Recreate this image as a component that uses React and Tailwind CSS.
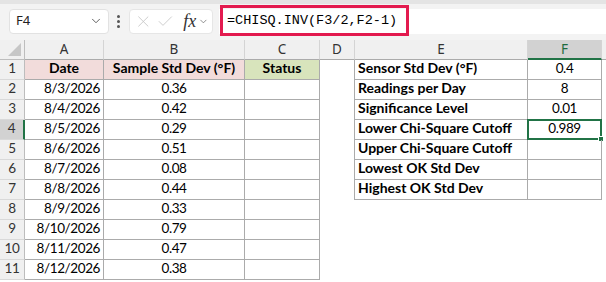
import { ChevronDown, X, Check } from "lucide-react";

const cols = ["A", "B", "C", "D", "E", "F"];
const widths = "grid-cols-[25px_79px_141px_75px_35px_173px_74px_1fr]";

const dates = [
  ["8/3/2026", "0.36"],
  ["8/4/2026", "0.42"],
  ["8/5/2026", "0.29"],
  ["8/6/2026", "0.51"],
  ["8/7/2026", "0.08"],
  ["8/8/2026", "0.44"],
  ["8/9/2026", "0.33"],
  ["8/10/2026", "0.79"],
  ["8/11/2026", "0.47"],
  ["8/12/2026", "0.38"],
];

const params = [
  ["Sensor Std Dev (°F)", "0.4"],
  ["Readings per Day", "8"],
  ["Significance Level", "0.01"],
  ["Lower Chi-Square Cutoff", "0.989"],
  ["Upper Chi-Square Cutoff", ""],
  ["Lowest OK Std Dev", ""],
  ["Highest OK Std Dev", ""],
];

const line = "border-[#ababab]";
const num = "text-[13.5px] tracking-[-0.4px]";

const Cell = ({ className = "", children }) => (
  <div className={`h-5 flex items-end pb-[1px] overflow-visible whitespace-nowrap ${className}`}>
    {children}
  </div>
);

const Row = ({ n }) => {
  const i = n - 1;
  const header = n === 1;
  const p = params[i];
  return (
    <>
      <Cell
        className={`justify-center ${num} text-[#333] border-b border-[#d9d9d9] ${
          n === 4 ? "bg-[#d2d2d2] text-[#1e6b3f] border-r-2 border-r-[#217346]" : "bg-[#f0f0f0] border-r border-r-[#bdbdbd]"
        }`}
      >
        {n}
      </Cell>
      {header ? (
        <>
          <Cell className={`justify-center font-bold bg-[#f2dcdb] border-r border-b ${line}`}>Date</Cell>
          <Cell className={`justify-center font-bold bg-[#f2dcdb] border-r border-b ${line}`}>Sample Std Dev (°F)</Cell>
          <Cell className={`justify-center font-bold bg-[#d8e4bc] border-r border-b ${line}`}>Status</Cell>
        </>
      ) : (
        <>
          <Cell className={`justify-end pr-[3px] ${num} border-r border-b ${line}`}>{dates[i - 1][0]}</Cell>
          <Cell className={`justify-center ${num} border-r border-b ${line}`}>{dates[i - 1][1]}</Cell>
          <Cell className={`border-r border-b ${line}`} />
        </>
      )}
      <Cell className={p ? `border-r ${line}` : ""} />
      {p ? (
        <>
          <Cell className={`pl-[3px] font-bold border-r border-b ${line}`}>{p[0]}</Cell>
          <Cell className={`relative justify-center ${num} border-r border-b ${line}`}>
            {p[1]}
            {n === 4 && (
              <div className="absolute -left-px -top-px -right-px -bottom-px border-2 border-[#217346]">
                <div className="absolute -right-[4px] -bottom-[4px] w-[6px] h-[6px] bg-[#217346] border border-white" />
              </div>
            )}
          </Cell>
        </>
      ) : (
        <>
          <Cell />
          <Cell />
        </>
      )}
      <Cell />
    </>
  );
};

const App = () => {
  return (
    <div className="w-[606px] h-[282px] overflow-hidden bg-white font-['Lato',sans-serif] text-[14px] text-black">
      {/* formula bar */}
      <div className="relative h-10 bg-[#f3f3f3] border-t-4 border-[#e4e4e4]">
        <div className="flex items-center h-full pb-[2px]">
          <div className="ml-[9px] w-[100px] h-[25px] bg-white rounded-[4px] border border-[#e2e2e2] flex items-center justify-between pl-[6px] pr-[5px] font-['Noto_Sans',sans-serif] text-[13px] text-[#222]">
            <span>F4</span>
            <ChevronDown size={14} strokeWidth={1.6} className="text-[#555]" />
          </div>
          <div className="ml-[8px] flex flex-col gap-[2px]">
            <span className="w-[3px] h-[3px] rounded-full bg-[#555]" />
            <span className="w-[3px] h-[3px] rounded-full bg-[#555]" />
            <span className="w-[3px] h-[3px] rounded-full bg-[#555]" />
          </div>
          <div className="ml-[9px] w-[84px] h-[25px] bg-white rounded-[4px] border border-[#e6e6e6] flex items-center pl-[4px] pr-[3px] text-[#c4c4c4]">
            <X size={19} strokeWidth={1.1} />
            <Check size={19} strokeWidth={1.1} className="ml-[3px]" />
            <span className="ml-[9px] font-['Liberation_Serif',serif] italic text-[18px] text-[#333] leading-none">fx</span>
            <ChevronDown size={11} strokeWidth={1.6} className="ml-[2px] text-[#666]" />
          </div>
          <div className="ml-[6px] flex-1 h-[25px] bg-white flex items-center pl-[8px] font-['Liberation_Mono',monospace] text-[13.5px] text-black">
            =CHISQ.INV(F3/2,F2-1)
          </div>
        </div>
        <div className="absolute left-[220px] top-[1px] w-[189px] h-[31px] border-[3px] border-[#e31b4f]" />
      </div>

      {/* sheet */}
      <div className={`grid ${widths}`}>
        <div className="h-5 bg-[#f0f0f0] border-r border-b border-[#bdbdbd] relative">
          <div className="absolute right-[3px] bottom-[3px] w-0 h-0 border-l-[13px] border-l-transparent border-b-[13px] border-b-[#c6c6c6]" />
        </div>
        {cols.map((c) => (
          <div
            key={c}
            className={`h-5 flex items-center justify-center font-['Noto_Sans',sans-serif] text-[13.5px] border-r border-[#d4d4d4] ${
              c === "F"
                ? "bg-[#d2d2d2] text-[#1e6b3f] border-b-2 border-b-[#217346]"
                : "bg-[#f0f0f0] text-[#333] border-b border-b-[#ababab]"
            }`}
          >
            {c}
          </div>
        ))}
        <div className="h-5 bg-[#f0f0f0] border-b border-[#ababab]" />
        {Array.from({ length: 11 }, (_, k) => (
          <Row key={k} n={k + 1} />
        ))}
      </div>
    </div>
  );
};

export default App;
